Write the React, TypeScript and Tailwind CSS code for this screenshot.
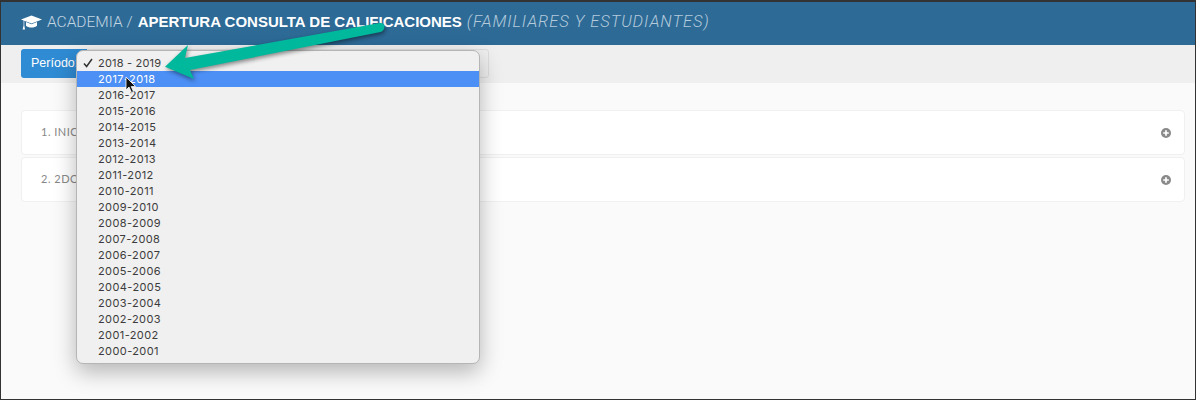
const years = ["2016-2017","2015-2016","2014-2015","2013-2014","2012-2013","2011-2012","2010-2011","2009-2010","2008-2009","2007-2008","2006-2007","2005-2006","2004-2005","2003-2004","2002-2003","2001-2002","2000-2001"];

function Cap() {
  return (
    <svg width="21" height="15" viewBox="0 0 21 15" className="shrink-0">
      <path d="M10.5 0.5 L0 4.4 L2.6 5.4 L2.6 10.5 L1.6 14.5 L4 14.5 L3.3 10.5 L3.3 5.7 L10.5 8.4 L21 4.4 Z" fill="#fff" />
      <path d="M5 7 L5 10.8 C7 13.2 14 13.2 16 10.8 L16 7 L10.5 9.2 Z" fill="#fff" />
    </svg>
  );
}

function Plus() {
  return (
    <svg width="10" height="10" viewBox="0 0 10 10">
      <circle cx="5" cy="5" r="5" fill="#8a8a8a" />
      <path d="M5 2.2V7.8M2.2 5H7.8" stroke="#fff" strokeWidth="1.7" />
    </svg>
  );
}

function Panel({ label }: { label: string }) {
  return (
    <div className="h-[45px] flex items-center justify-between bg-white border border-[#f0f0f0] rounded-[4px] pl-[19px] pr-[13px] text-[11px] tracking-[0.5px] text-[#888888]">
      <span>{label}</span>
      <Plus />
    </div>
  );
}

export default function App() {
  return (
    <div className="relative w-[1196px] h-[400px] overflow-hidden bg-[#fafafa] border-x border-b border-t-2 border-[#333333] font-['Lato','Open_Sans',sans-serif]">
      <header className="h-[43px] bg-[#2d6a96] flex items-center pb-[2px] pl-[20px] text-[15px] text-white font-['Liberation_Sans',sans-serif]">
        <Cap />
        <span className="ml-[5px] font-['Roboto',sans-serif] font-light text-[15.5px] text-[#c3d5e2]">ACADEMIA /</span>
        <span className="ml-[5px] font-bold">APERTURA CONSULTA DE CALIFICACIONES</span>
        <span className="ml-[5px] font-['Roboto',sans-serif] font-light italic tracking-[0.95px] text-[#b4cbdc] text-[16.5px]">(FAMILIARES Y ESTUDIANTES)</span>
      </header>

      <div className="h-[38px] bg-[#efefef] flex items-start pt-[4px] pl-[20px]">
        <div className="w-[66px] h-[29px] bg-[#2f8bd3] rounded-l-[3px] text-white text-[12.5px] leading-[28px] pl-[10px] font-['Liberation_Sans',sans-serif]">Período:</div>
        <div className="w-[402px] h-[29px] border border-[#dddddd] rounded-r-[3px] bg-[#efefef]"></div>
      </div>

      <main className="flex flex-col gap-[2px] pt-[27px] pl-[20px] pr-[10px]">
        <Panel label="1. INICIAL" />
        <Panel label="2. 2DO" />
      </main>

      <div className="absolute left-[75px] top-[48px] w-[404px] h-[314px] pt-[4px] bg-[#f0f0f0] border border-[#b5b5b5] rounded-[7px] shadow-[0_8px_22px_rgba(0,0,0,0.28)] text-[11px] leading-[16px] tracking-[0.4px] text-[#3c3c3c] font-['Inter',sans-serif]">
        <div className="relative h-[16px] pl-[21px]">
          <svg width="10" height="10" viewBox="0 0 10 10" className="absolute left-[6px] top-[3px]">
            <path d="M1 5.5 L3.6 8.5 L9 1" fill="none" stroke="#333" strokeWidth="1.5" />
          </svg>
          <span className="tracking-[0.2px]">2018 - 2019</span>
        </div>
        <div className="h-[16px] pl-[21px] bg-[#4c8ff5] text-white">2017-2018</div>
        {years.map((y) => (
          <div key={y} className="h-[16px] pl-[21px]">{y}</div>
        ))}
      </div>

      <svg width="14" height="18" viewBox="0 0 14 18" className="absolute left-[124px] top-[74px]">
        <path d="M1 1 L1 14 L4 11 L6.5 16.5 L8.5 15.5 L6.2 10.5 L10.5 10.5 Z" fill="#111" stroke="#fff" strokeWidth="0.8" />
      </svg>

      <svg width="240" height="62" viewBox="0 0 240 62" className="absolute left-[160px] top-[18px] drop-shadow-[1px_2px_2px_rgba(0,0,0,0.45)]">
        <path d="M4 46.7 L27 25 L24 38 L219 3 C224.5 2.5 225 10.5 219.5 12 L29 50 L33 59 Z" fill="#00b89c" />
      </svg>
    </div>
  );
}
